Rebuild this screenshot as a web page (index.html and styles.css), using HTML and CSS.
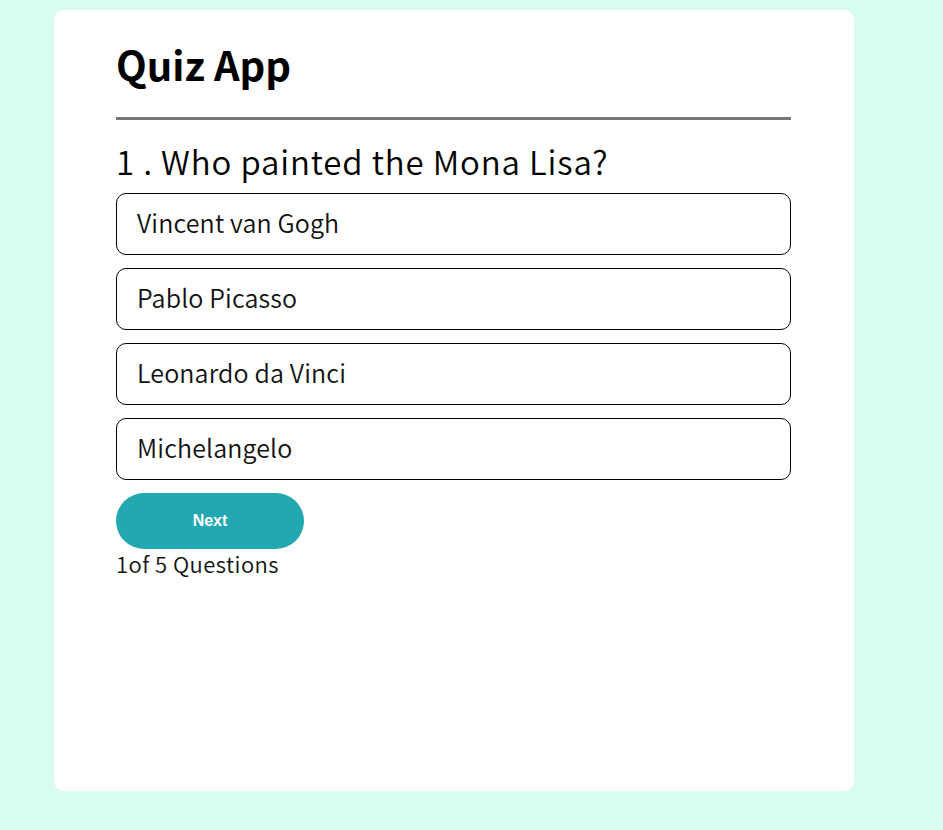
FILE: index.html
```html
<!DOCTYPE html>
<html lang="en">
<head>
<meta charset="utf-8">
<title>Quiz App</title>
<link rel="stylesheet" href="styles.css">
</head>
<body>
<div class="app">
  <h1 class="title">Quiz App</h1>
  <hr class="rule">
  <h2 class="question">1 . Who painted the Mona Lisa?</h2>
  <div class="answers">
    <button class="answer">Vincent van Gogh</button>
    <button class="answer">Pablo Picasso</button>
    <button class="answer">Leonardo da Vinci</button>
    <button class="answer">Michelangelo</button>
  </div>
  <button class="next">Next</button>
  <p class="progress">1of 5 Questions</p>
</div>
</body>
</html>
```
FILE: styles.css
```css
* { box-sizing: border-box; }
html, body { margin: 0; padding: 0; }
body {
  background: #d8fdf0;
  font-family: "Noto Sans CJK JP", "Noto Sans", sans-serif;
  color: #000;
  padding: 10px 0 0 54px;
}
.app {
  width: 800px;
  height: 781px;
  background: #fff;
  border-radius: 10px;
  padding: 32px 63px 0 62px;
}
.title {
  margin: 0;
  font-size: 40px;
  font-weight: 700;
  line-height: 44px;
}
.rule {
  margin: 31px 0 0;
  border: 0;
  height: 3px;
  background: #777;
}
.question {
  margin: 17px 0 0;
  font-size: 33px;
  font-weight: 350;
  line-height: 48px;
  letter-spacing: 0.85px;
}
.answers {
  display: flex;
  flex-direction: column;
  gap: 13px;
  margin-top: 8px;
}
.answer {
  display: block;
  width: 100%;
  height: 62px;
  background: #fff;
  border: 1px solid #000;
  border-radius: 10px;
  text-align: left;
  padding: 0 20px 4px;
  font-family: inherit;
  font-size: 25px;
  font-weight: 350;
  letter-spacing: 0.15px;
  color: #111;
}
.next {
  display: block;
  margin-top: 13px;
  width: 188px;
  height: 56px;
  border: 0;
  border-radius: 28px;
  background: #23a8b1;
  color: #fff;
  font-family: "Liberation Sans", Arial, sans-serif;
  font-weight: 700;
  font-size: 16px;
}
.progress {
  margin: -2px 0 0;
  font-size: 22px;
  font-weight: 350;
  line-height: 32px;
  letter-spacing: 0.45px;
  color: #111;
}
```
